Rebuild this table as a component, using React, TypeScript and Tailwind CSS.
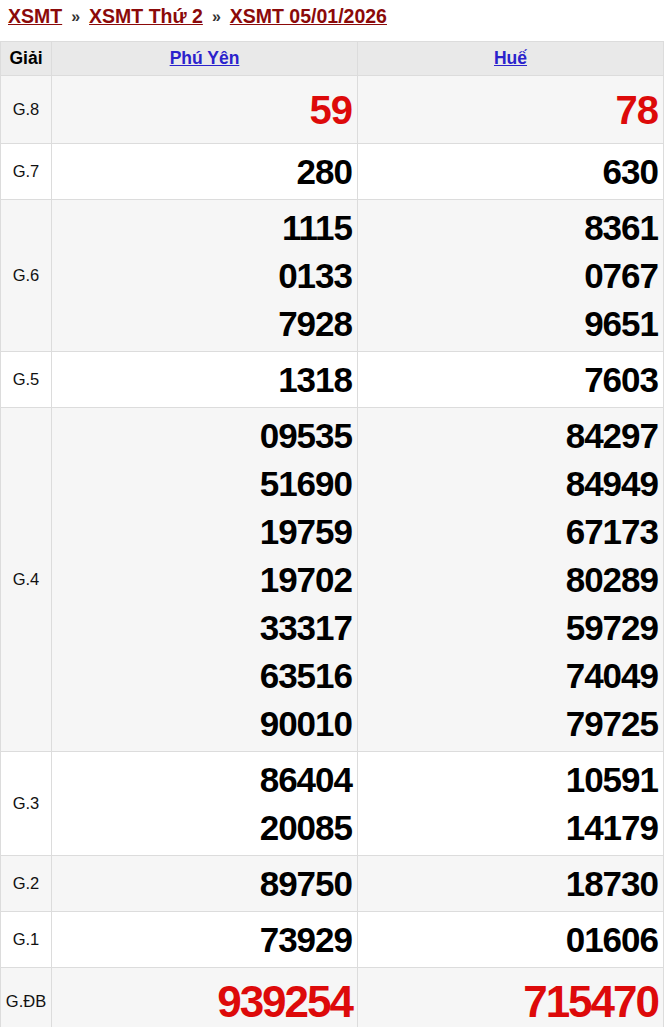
import React from "react";

type Row = { label: string; a: string[]; b: string[]; kind?: "g8" | "db" };

const rows: Row[] = [
  { label: "G.8", a: ["59"], b: ["78"], kind: "g8" },
  { label: "G.7", a: ["280"], b: ["630"] },
  { label: "G.6", a: ["1115", "0133", "7928"], b: ["8361", "0767", "9651"] },
  { label: "G.5", a: ["1318"], b: ["7603"] },
  {
    label: "G.4",
    a: ["09535", "51690", "19759", "19702", "33317", "63516", "90010"],
    b: ["84297", "84949", "67173", "80289", "59729", "74049", "79725"],
  },
  { label: "G.3", a: ["86404", "20085"], b: ["10591", "14179"] },
  { label: "G.2", a: ["89750"], b: ["18730"] },
  { label: "G.1", a: ["73929"], b: ["01606"] },
  { label: "G.ĐB", a: ["939254"], b: ["715470"], kind: "db" },
];

function Nums({ nums, kind }: { nums: string[]; kind?: string }) {
  const cls =
    kind === "g8"
      ? "text-[40px] leading-[60px] tracking-[-1px] text-[#dd0a0a]"
      : kind === "db"
      ? "text-[44px] leading-[60px] tracking-[-2px] text-[#dd0a0a]"
      : "text-[35px] leading-[48px] tracking-[-1px] text-black";
  return (
    <td className="border border-[#dcdcdc] pt-[4px] pb-[3px] pr-[5px] text-right align-middle">
      {nums.map((n, i) => (
        <div key={i} className={`font-bold ${cls}`}>
          {n}
        </div>
      ))}
    </td>
  );
}

export default function App() {
  return (
    <div className="bg-white w-[667px] min-h-[1027px]" style={{ fontFamily: '"Liberation Sans", Arial, sans-serif' }}>
      <div className="h-[41px] flex items-center pl-[8px] text-[19.5px] font-bold text-[#8b0a0a] gap-[9px] pb-[7px]">
        <span className="underline">XSMT</span>
        <span className="text-[#333] text-[16px]">»</span>
        <span className="underline">XSMT Thứ 2</span>
        <span className="text-[#333] text-[16px]">»</span>
        <span className="underline">XSMT 05/01/2026</span>
      </div>
      <table className="w-[663px] border-collapse table-fixed">
        <colgroup>
          <col className="w-[51px]" />
          <col className="w-[306px]" />
          <col className="w-[306px]" />
        </colgroup>
        <thead>
          <tr className="bg-[#e9e9e9] h-[34px]">
            <th className="border border-[#dcdcdc] text-[17.5px] font-bold text-black">Giải</th>
            <th className="border border-[#dcdcdc] text-[17.5px] font-bold">
              <span className="text-[#2b22cc] underline">Phú Yên</span>
            </th>
            <th className="border border-[#dcdcdc] text-[17.5px] font-bold">
              <span className="text-[#2b22cc] underline">Huế</span>
            </th>
          </tr>
        </thead>
        <tbody>
          {rows.map((r, i) => (
            <tr key={r.label} className={i % 2 === 0 ? "bg-[#f6f6f6]" : "bg-white"}>
              <td className="border border-[#dcdcdc] text-center align-middle text-[16.5px] text-[#111]">{r.label}</td>
              <Nums nums={r.a} kind={r.kind} />
              <Nums nums={r.b} kind={r.kind} />
            </tr>
          ))}
        </tbody>
      </table>
    </div>
  );
}
